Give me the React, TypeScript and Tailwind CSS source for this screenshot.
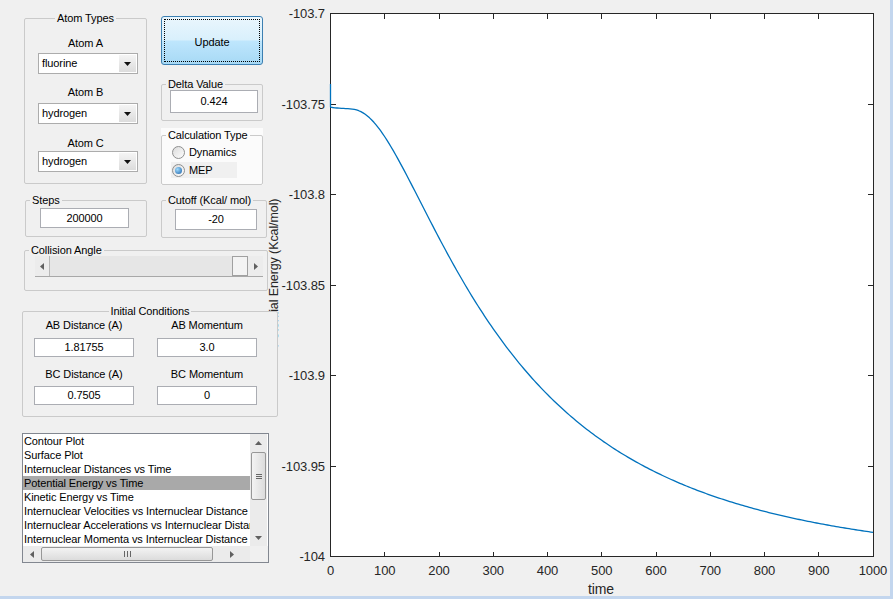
import React from 'react';

// standard normal cdf (Abramowitz & Stegun erf approximation)
function phi(z: number) {
  const x = Math.abs(z) / Math.SQRT2;
  const k = 1 / (1 + 0.3275911 * x);
  const erf = 1 - ((((1.061405429 * k - 1.453152027) * k + 1.421413741) * k - 0.284496736) * k + 0.254829592) * k * Math.exp(-x * x);
  return z >= 0 ? (1 + erf) / 2 : (1 - erf) / 2;
}

// potential energy along the MEP (kcal/mol) as a smooth fit of the run output
function energy(t: number) {
  const drop = t > 20 ? phi(1.2 * (Math.log(t - 20) - 5.674)) : 0;
  return -103.7517 - 0.00138 * (t / (t + 20)) - 0.2519 * drop;
}
const spikeTop = -103.739;

const X0 = 68.5, X1 = 611, Y0 = 13.5, Y1 = 556.5;
const sx = (t: number) => X0 + (t / 1000) * (X1 - X0);
const sy = (v: number) => Y0 + ((-103.7 - v) / 0.3) * (Y1 - Y0);

function curvePath() {
  let d = `M${sx(0)},${sy(spikeTop).toFixed(2)}`;
  for (let t = 0; t <= 1000; t += 4) d += ` L${sx(t).toFixed(2)},${sy(energy(t)).toFixed(2)}`;
  return d;
}

const yTicks = ['-103.7', '-103.75', '-103.8', '-103.85', '-103.9', '-103.95', '-104'];
const xTicks = [0, 100, 200, 300, 400, 500, 600, 700, 800, 900, 1000];

const plotTypes = [
  'Contour Plot',
  'Surface Plot',
  'Internuclear Distances vs Time',
  'Potential Energy vs Time',
  'Kinetic Energy vs Time',
  'Internuclear Velocities vs Internuclear Distance',
  'Internuclear Accelerations vs Internuclear Distance',
  'Internuclear Momenta vs Internuclear Distance',
];

function Group({ title, center, className = '', children }: { title: string; center?: boolean; className?: string; children?: React.ReactNode }) {
  return (
    <fieldset className={`border border-[#cacaca] rounded-[2px] bg-[#f0f0f0] shrink-0 ${className}`}>
      <legend className={`leading-[12px] px-[2px] ${center ? 'mx-auto' : 'ml-[4px]'}`}>{title}</legend>
      {children}
    </fieldset>
  );
}

function Field({ value, className = '' }: { value: string; className?: string }) {
  return (
    <div className={`border border-[#abadb3] bg-white flex items-center justify-center ${className}`}>{value}</div>
  );
}

function Select({ value }: { value: string }) {
  return (
    <div className="ml-[13px] w-[100px] h-[21px] border border-[#acacac] bg-white flex">
      <span className="flex-1 pl-[3px] flex items-center">{value}</span>
      <span className="w-[17px] m-[1px] bg-gradient-to-b from-[#f5f5f5] to-[#dcdcdc] flex items-center justify-center">
        <svg width="7" height="4" viewBox="0 0 7 4"><path d="M0 0h7L3.5 4z" fill="#111" /></svg>
      </span>
    </div>
  );
}

function Radio({ checked }: { checked?: boolean }) {
  return (
    <span className="w-[13px] h-[13px] rounded-full border border-[#8e8f8f] bg-gradient-to-br from-[#dcdcdc] to-[#fdfdfd] flex items-center justify-center">
      {checked && <span className="w-[7px] h-[7px] rounded-full bg-[radial-gradient(circle_at_35%_35%,#9fdcff,#1b5fa6)]" />}
    </span>
  );
}

function Arrow({ dir }: { dir: 'up' | 'down' | 'left' | 'right' }) {
  const d = { up: 'M0 4h7L3.5 0z', down: 'M0 0h7L3.5 4z', left: 'M4 0v7L0 3.5z', right: 'M0 0v7L4 3.5z' }[dir];
  const vert = dir === 'up' || dir === 'down';
  return (
    <svg width={vert ? 7 : 4} height={vert ? 4 : 7} viewBox={vert ? '0 0 7 4' : '0 0 4 7'}>
      <path d={d} fill="#606060" />
    </svg>
  );
}

function Plot() {
  return (
    <svg width="628" height="596" className="shrink-0 font-['Liberation_Sans',Arial,sans-serif]">
      <rect x={X0} y={Y0} width={X1 - X0} height={Y1 - Y0} fill="#fff" />
      <g stroke="#262626" strokeWidth="1" shapeRendering="crispEdges">
        {xTicks.map((t) => (
          <g key={t}>
            <line x1={sx(t)} x2={sx(t)} y1={Y1} y2={Y1 - 5} />
            <line x1={sx(t)} x2={sx(t)} y1={Y0} y2={Y0 + 5} />
          </g>
        ))}
        {yTicks.map((_, i) => {
          const y = Y0 + (i * (Y1 - Y0)) / 6;
          return (
            <g key={i}>
              <line x1={X0} x2={X0 + 5} y1={y} y2={y} />
              <line x1={X1} x2={X1 - 5} y1={y} y2={y} />
            </g>
          );
        })}
        <rect x={X0} y={Y0} width={X1 - X0} height={Y1 - Y0} fill="none" />
      </g>
      <path d={curvePath()} fill="none" stroke="#0072bd" strokeWidth="1.3" strokeLinejoin="round" />
      <g fill="#262626" fontSize="13">
        {yTicks.map((s, i) => (
          <text key={s} x="63" y={Y0 + (i * (Y1 - Y0)) / 6} textAnchor="end" dominantBaseline="central">{s}</text>
        ))}
        {xTicks.map((t) => (
          <text key={t} x={sx(t)} y="570" textAnchor="middle" dominantBaseline="central">{t}</text>
        ))}
        <text x="339" y="589" fontSize="14" textAnchor="middle" dominantBaseline="central">time</text>
        <text transform="translate(16,273) rotate(-90)" fontSize="12.5" textAnchor="middle">Potential Energy (Kcal/mol)</text>
      </g>
    </svg>
  );
}

export default function App() {
  return (
    <div className="w-[893px] h-[599px] bg-[#f0f0f0] flex flex-col overflow-hidden font-['Liberation_Sans',Arial,sans-serif] text-[11px] tracking-[-0.1px] text-black select-none">
      <div className="flex h-[596px]">
        {/* control panel */}
        <div className="w-[262px] shrink-0 relative z-10 flex flex-col">
          <div className="flex items-start">
            <Group title="Atom Types" center className="ml-[24px] mt-[12px] w-[123px] pb-[11px]">
              <div className="mt-[13px] leading-[12px] text-center">Atom A</div>
              <div className="mt-[4px]"><Select value="fluorine" /></div>
              <div className="mt-[12px] leading-[12px] text-center">Atom B</div>
              <div className="mt-[5px]"><Select value="hydrogen" /></div>
              <div className="mt-[13px] leading-[12px] text-center">Atom C</div>
              <div className="mt-[2px]"><Select value="hydrogen" /></div>
            </Group>
            <div className="ml-[14px] w-[105px] flex flex-col">
              <button className="mt-[16px] w-[102px] h-[49px] rounded-[3px] border border-[#3c7fb1] bg-[linear-gradient(to_bottom,#eaf6fd_0%,#d9f0fc_48%,#bee6fd_52%,#a7d9f5_100%)] p-[2px]">
                <div className="h-full pt-[3px] border border-dotted border-black flex items-center justify-center">Update</div>
              </button>
              <Group title="Delta Value" className="mt-[13px] pb-[7px]">
                <Field value="0.424" className="ml-[8px] w-[88px] h-[23px]" />
              </Group>
              <div className="mt-[7px] bg-[#fbfbfb]">
                <Group title="Calculation Type" className="mt-[1px] pt-[3px] pb-[6px] bg-[#fbfbfb]">
                  <div className="ml-[9px] w-[66px] h-[17px] pl-[1px] flex items-center gap-[4px]">
                    <Radio /> <span>Dynamics</span>
                  </div>
                  <div className="ml-[9px] mt-[1px] w-[66px] h-[16px] pl-[1px] bg-[#f0f0f0] flex items-center gap-[4px]">
                    <Radio checked /> <span>MEP</span>
                  </div>
                </Group>
              </div>
            </div>
          </div>

          <div className="flex items-start mt-[9px]">
            <Group title="Steps" className="ml-[25px] w-[122px] pb-[8px]">
              <Field value="200000" className="mt-[2px] ml-[14px] w-[89px] h-[20px]" />
            </Group>
            <Group title="Cutoff (Kcal/ mol)" className="ml-[14px] w-[106px] pb-[7px]">
              <Field value="-20" className="mt-[3px] ml-[13px] w-[82px] h-[21px]" />
            </Group>
          </div>

          <Group title="Collision Angle" className="mt-[6px] ml-[24px] w-[244px] pb-[13px]">
            <div className="ml-[10px] w-[228px] h-[21px] bg-[#e6e6e6] border-b border-[#a8a8a8] flex">
              <span className="w-[15px] border-r border-[#b8b8b8] bg-[#ececec] flex items-center justify-center"><Arrow dir="left" /></span>
              <span className="flex-1" />
              <span className="w-[16px] border border-[#a0a0a0] bg-[#f3f3f3]" />
              <span className="w-[15px] bg-[#ececec] flex items-center justify-center"><Arrow dir="right" /></span>
            </div>
          </Group>

          <Group title="Initial Conditions" center className="mt-[14px] ml-[22px] w-[256px] pt-[2px] pb-[11px]">
            <div className="pl-[11px] grid grid-cols-[100px_100px] gap-x-[23px] text-center">
              <div className="leading-[13px]">AB Distance (A)</div>
              <div className="leading-[13px]">AB Momentum</div>
              <Field value="1.81755" className="mt-[6px] h-[19px]" />
              <Field value="3.0" className="mt-[6px] h-[19px]" />
              <div className="mt-[11px] leading-[13px]">BC Distance (A)</div>
              <div className="mt-[11px] leading-[13px]">BC Momentum</div>
              <Field value="0.7505" className="mt-[5px] h-[19px]" />
              <Field value="0" className="mt-[5px] h-[19px]" />
            </div>
          </Group>

          <div className="mt-[16px] ml-[22px] w-[247px] h-[130px] shrink-0 border border-[#828790] bg-white flex flex-col">
            <div className="flex h-[112px]">
              <div className="w-[227px] overflow-hidden">
                {plotTypes.map((p, i) => (
                  <div key={p} className={`h-[14px] leading-[14px] pl-[1px] whitespace-nowrap ${i === 3 ? 'bg-[#a9a9a9]' : ''}`}>{p}</div>
                ))}
              </div>
              <div className="w-[17px] bg-[#ebebeb] flex flex-col items-center">
                <span className="h-[17px] flex items-center"><Arrow dir="up" /></span>
                <span className="mt-[1px] w-[15px] h-[48px] rounded-[2px] border border-[#979797] bg-gradient-to-r from-[#f3f3f3] to-[#dcdcdc] flex flex-col items-center justify-center gap-[1px]">
                  <span className="w-[6px] h-[1px] bg-[#666]" />
                  <span className="w-[6px] h-[1px] bg-[#666]" />
                  <span className="w-[6px] h-[1px] bg-[#666]" />
                </span>
                <span className="flex-1" />
                <span className="h-[17px] flex items-center"><Arrow dir="down" /></span>
              </div>
            </div>
            <div className="flex h-[16px]">
              <div className="w-[227px] bg-[#ebebeb] flex items-center">
                <span className="w-[17px] flex justify-center"><Arrow dir="left" /></span>
                <span className="ml-[1px] w-[172px] h-[14px] rounded-[2px] border border-[#979797] bg-gradient-to-b from-[#f3f3f3] to-[#dcdcdc] flex items-center justify-center gap-[2px]">
                  <span className="w-[1px] h-[6px] bg-[#666]" />
                  <span className="w-[1px] h-[6px] bg-[#666]" />
                  <span className="w-[1px] h-[6px] bg-[#666]" />
                </span>
                <span className="flex-1 flex justify-center"><Arrow dir="right" /></span>
              </div>
              <div className="flex-1 bg-[#f0f0f0]" />
            </div>
          </div>
        </div>

        <Plot />
        <div className="w-[3px] bg-[#c3d6ee]" />
      </div>
      <div className="h-[3px] bg-[#c3d6ee]" />
    </div>
  );
}
